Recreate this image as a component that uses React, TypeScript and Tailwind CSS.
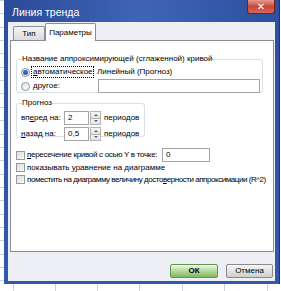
import React from "react";

const font = { fontFamily: '"Liberation Sans", "DejaVu Sans", sans-serif' };

function Radio({ checked }: { checked?: boolean }) {
  return (
    <span className="w-[9px] h-[9px] rounded-full border border-[#8e8f8f] bg-gradient-to-br from-[#e6e6e6] to-white flex items-center justify-center shrink-0">
      {checked && <span className="w-[5px] h-[5px] rounded-full bg-[#2a67c4]" />}
    </span>
  );
}

function Check() {
  return <span className="w-[9px] h-[9px] border border-[#9a9a9a] bg-gradient-to-br from-[#dcdcdc] to-[#f8f8f8] shrink-0" />;
}

function Spin({ value }: { value: string }) {
  return (
    <div className="flex h-[14px]">
      <div className="w-[25px] h-full border border-[#a4a4a4] bg-white pl-[3px] leading-[12px] text-black">{value}</div>
      <div className="w-[11px] h-full flex flex-col ml-px">
        <div className="flex-1 border border-[#b4b4b4] bg-gradient-to-b from-[#f7f7f7] to-[#e2e2e2] flex items-center justify-center">
          <span className="w-0 h-0 border-l-[2px] border-r-[2px] border-b-[2px] border-l-transparent border-r-transparent border-b-[#4a5f80]" />
        </div>
        <div className="flex-1 border border-t-0 border-[#b4b4b4] bg-gradient-to-b from-[#f7f7f7] to-[#e2e2e2] flex items-center justify-center">
          <span className="w-0 h-0 border-l-[2px] border-r-[2px] border-t-[2px] border-l-transparent border-r-transparent border-t-[#4a5f80]" />
        </div>
      </div>
    </div>
  );
}

const gridCols = [13, 55, 97, 139, 182, 224, 267];
const gridRows = Array.from({ length: 22 }, (_, i) => Math.round(i * 13.35));

export default function App() {
  return (
    <div className="relative w-[281px] h-[291px] overflow-hidden bg-white text-black" style={font}>
      {/* excel sheet behind */}
      {gridRows.map((y) => (
        <div key={"r" + y} className="absolute left-0 w-[6px] h-px bg-[#c9d2de]" style={{ top: y }} />
      ))}
      {gridCols.map((x) => (
        <div key={"c" + x} className="absolute top-[284px] bottom-0 w-px bg-[#c9d2de]" style={{ left: x }} />
      ))}

      {/* dialog window */}
      <div className="absolute left-[4px] top-0 w-[276px] h-[284px] flex flex-col bg-gradient-to-b from-[#2d4f9c] to-[#3359ad] border-r border-[#1d3578]">
        <div className="h-[22px] flex items-start justify-between bg-gradient-to-r from-[#2a4b97] via-[#3f64b7] to-[#2d4f9f]">
          <span className="pl-[8px] pt-[6px] text-[10.5px] leading-[12px] text-white">Линия тренда</span>
          <div className="mr-[4px] w-[28px] h-[14px] rounded-b-[3px] border border-t-0 border-[#6b2420] bg-gradient-to-b from-[#e79a8c] via-[#c8453a] to-[#d66757] flex items-center justify-center">
            <span className="text-white text-[10px] font-bold leading-none">✕</span>
          </div>
        </div>

        <div className="flex-1 ml-[4px] mr-[4px] mb-[3px] bg-[#eeeff4] flex flex-col pl-[2px] pr-px text-[8px] whitespace-nowrap">
          {/* tabs */}
          <div className="h-[18px] flex items-end pl-[3px]">
            <div className="w-[32px] h-[14px] border border-b-0 border-[#8c8e94] rounded-t-[2px] bg-gradient-to-b from-[#f4f4f4] to-[#dcdcdc] flex items-center justify-center">
              Тип
            </div>
            <div className="relative z-10 -mb-px w-[51px] h-[18px] border border-b-0 border-[#8c8e94] rounded-t-[2px] bg-white flex items-start justify-center pt-[3px]">
              Параметры
            </div>
          </div>

          {/* panel */}
          <div className="h-[212px] border border-[#898c95] bg-white pl-[5px] pr-[10px] pt-[13px] leading-[10px]">
            <fieldset className="w-[247px] h-[39px] border border-[#d5dfe5] rounded-[3px] pl-[4px] pt-[2px]">
              <legend className="ml-px px-0">Название аппроксимирующей (сглаженной) кривой</legend>
              <div className="flex items-center h-[12px]">
                <Radio checked />
                <span className="ml-[1px] px-[1px] border border-dotted border-black w-[63px]">
                  <span className="underline">а</span>втоматическое:
                </span>
                <span className="ml-[3px]">Линейный (Прогноз)</span>
              </div>
              <div className="flex items-center h-[14px] mt-[1px]">
                <Radio />
                <span className="ml-[3px] w-[63px]">
                  <span className="underline">д</span>ругое:
                </span>
                <div className="ml-[2px] w-[162px] h-[14px] border border-[#a4a4a4] bg-white" />
              </div>
            </fieldset>

            <fieldset className="mt-[5px] w-[129px] h-[39px] border border-[#d5dfe5] rounded-[3px] pl-[4px] pt-[3px]">
              <legend className="ml-px px-0">Прогноз</legend>
              <div className="flex items-center h-[14px]">
                <span className="w-[43px]">
                  вп<span className="underline">е</span>ред на:
                </span>
                <Spin value="2" />
                <span className="ml-[3px]">периодов</span>
              </div>
              <div className="flex items-center h-[14px] mt-[2px]">
                <span className="w-[43px]">
                  <span className="underline">н</span>азад на:
                </span>
                <Spin value="0,5" />
                <span className="ml-[3px]">периодов</span>
              </div>
            </fieldset>

            <div className="mt-[11px] flex items-center h-[14px]">
              <Check />
              <span className="ml-[2px] w-[135px] tracking-[-0.3px]">
                <span className="underline">п</span>ересечение кривой с осью Y в точке:
              </span>
              <div className="w-[48px] h-[14px] border border-[#a4a4a4] bg-white pl-[3px] leading-[12px]">0</div>
            </div>
            <div className="flex items-center h-[11px]">
              <Check />
              <span className="ml-[2px]">
                показывать <span className="underline">у</span>равнение на диаграмме
              </span>
            </div>
            <div className="mt-px flex items-center h-[11px]">
              <Check />
              <span className="ml-[2px] tracking-[-0.45px]">
                поместить на диаграмму величину досто<span className="underline">в</span>ерности аппроксимации (R^2)
              </span>
            </div>
          </div>

          {/* buttons */}
          <div className="flex justify-end gap-[8px] pr-[1px] mt-[12px]">
            <div className="w-[48px] h-[14px] border border-[#5a9a4a] rounded-[2px] bg-gradient-to-b from-[#eef7e8] via-[#b5d99c] to-[#7fb763] flex items-center justify-center font-bold">
              ОК
            </div>
            <div className="w-[47px] h-[14px] border border-[#8a8a8a] rounded-[2px] bg-gradient-to-b from-[#f6f6f6] via-[#e2e2e2] to-[#cfcfcf] flex items-center justify-center">
              Отмена
            </div>
          </div>
        </div>
      </div>
    </div>
  );
}
